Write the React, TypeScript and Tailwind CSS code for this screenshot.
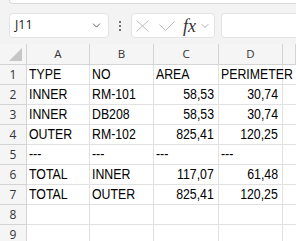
import React from 'react';
import { ChevronDown } from 'lucide-react';

const rows: string[][] = [
  ['TYPE', 'NO', 'AREA', 'PERIMETER'],
  ['INNER', 'RM-101', '58,53', '30,74'],
  ['INNER', 'DB208', '58,53', '30,74'],
  ['OUTER', 'RM-102', '825,41', '120,25'],
  ['---', '---', '---', '---'],
  ['TOTAL', 'INNER', '117,07', '61,48'],
  ['TOTAL', 'OUTER', '825,41', '120,25'],
  ['', '', '', ''],
  ['', '', '', ''],
];

// numbers sit on the right, like excel does
const isNum = (v: string) => /^[0-9,]+$/.test(v);

export default function App() {
  return (
    <div className="w-[296px] h-[241px] overflow-hidden bg-[#f3f3f3]">
      {/* ribbon edge */}
      <div className="h-[4px] ml-[9px] bg-white rounded-bl-[6px] border-b border-l border-[#d9d9d9]" />

      {/* formula bar */}
      <div className="flex h-[25px] mt-[9px] items-stretch">
        <div className="ml-[9px] w-[100px] bg-white rounded-[4px] border border-[#e3e3e3] flex items-center justify-between pl-[5px] pr-[5px]">
          <span className="text-[12.5px] text-[#222] font-['Open_Sans',sans-serif]">J11</span>
          <ChevronDown size={13} strokeWidth={1.5} className="text-[#444]" />
        </div>
        <div className="w-[22px] flex flex-col items-center justify-center gap-[2px]">
          <span className="w-[2px] h-[2px] bg-[#444] rounded-full" />
          <span className="w-[2px] h-[2px] bg-[#444] rounded-full" />
          <span className="w-[2px] h-[2px] bg-[#444] rounded-full" />
        </div>
        <div className="w-[84px] bg-white rounded-[4px] border border-[#e3e3e3] flex items-center pl-[4px]">
          <svg width="13" height="12" viewBox="0 0 13 12" className="mt-[1px]">
            <path d="M0.5 0.5 L12.5 11.5 M12.5 0.5 L0.5 11.5" stroke="#bcbcbc" strokeWidth="1" fill="none" />
          </svg>
          <svg width="16" height="11" viewBox="0 0 16 11" className="ml-[10px] mt-[1px]">
            <path d="M0.5 3.5 L6.5 9.5 L15.5 0.5" stroke="#bcbcbc" strokeWidth="1" fill="none" />
          </svg>
          <span className="ml-[8px] text-[18px] leading-[20px] italic text-[#333] font-['Liberation_Serif',serif]">fx</span>
          <ChevronDown size={12} strokeWidth={1.2} className="text-[#777] ml-[3px] mt-[1px]" />
        </div>
        <div className="ml-[6px] flex-1 bg-white rounded-l-[4px] border border-r-0 border-[#e3e3e3]" />
      </div>

      {/* sheet */}
      <div className="mt-[6px] bg-white grid grid-cols-[27px_63px_64px_65px_64px_1fr] text-[14px] text-black font-['Liberation_Sans',Arial,sans-serif]">
        <div className="h-[21px] bg-[#f5f5f5] border-r border-b border-[#d4d4d4] flex items-end justify-end pr-[4px] pb-[3px]">
          <svg width="13" height="13" viewBox="0 0 13 13">
            <polygon points="13,0 13,13 0,13" fill="#c6c6c6" />
          </svg>
        </div>
        {['A', 'B', 'C', 'D', ''].map((c, i) => (
          <div
            key={i}
            className="h-[21px] bg-[#f5f5f5] border-r border-b border-[#d4d4d4] flex items-center justify-center text-[11.5px] text-[#333] font-['Open_Sans',sans-serif]"
          >
            {c}
          </div>
        ))}

        {rows.map((r, ri) => (
          <React.Fragment key={ri}>
            <div className="h-[20px] bg-[#f5f5f5] border-r border-b border-[#d4d4d4] flex items-center justify-center text-[12px] text-[#333] font-['Open_Sans',sans-serif]">
              {ri + 1}
            </div>
            {r.map((v, ci) => (
              <div
                key={ci}
                className={`h-[20px] border-r border-b border-[#e1e1e1] leading-[19px] whitespace-nowrap ${
                  isNum(v) ? 'text-right pr-[4px]' : 'pl-[2px]'
                }`}
              >
                <span className={`inline-block scale-x-[0.88] ${isNum(v) ? 'origin-right' : 'origin-left'}`}>{v}</span>
              </div>
            ))}
            <div className="h-[20px] border-b border-[#e1e1e1]" />
          </React.Fragment>
        ))}
      </div>
    </div>
  );
}
